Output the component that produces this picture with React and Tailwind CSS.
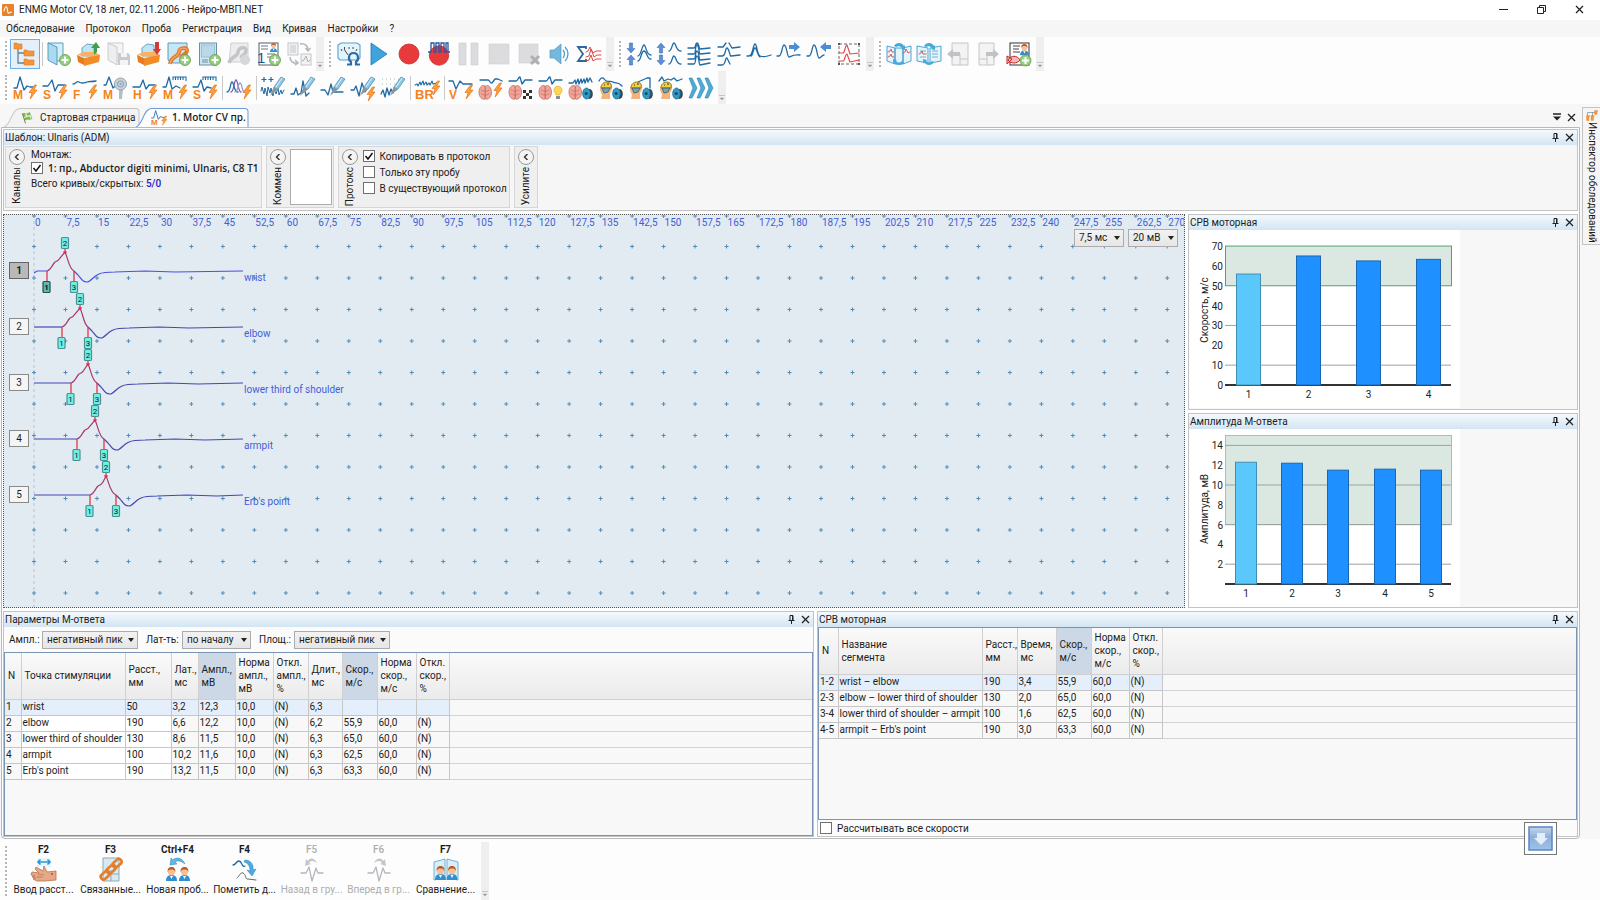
import { useState } from 'react';
import { clsx } from 'clsx';

const BLUE = '#1f6aa5';
const ORANGE = '#f58220';
const GRAY = '#c4c6ca';

/* ---------- icon parts ---------- */

const Wave = ({ d, c = BLUE, w = 1.3 }) => (
  <path d={d} fill="none" stroke={c} strokeWidth={w} strokeLinejoin="round" strokeLinecap="round" />
);

const Bolt = ({ x = 16, y = 9 }) => (
  <path
    transform={`translate(${x} ${y})`}
    d="M5.5 0L0 7.5h3L1.2 14 8 5H4.8L7.6 0z"
    fill="#f9a13a"
    stroke="#e8701a"
    strokeWidth=".7"
  />
);

const Letter = ({ x = 0, y = 23, size = 12, children, c = ORANGE }) => (
  <text x={x} y={y} fontSize={size} fontWeight="700" fill={c} fontFamily="Liberation Sans, sans-serif">
    {children}
  </text>
);

const Plus = ({ x = 18, y = 18 }) => (
  <g>
    <circle cx={x} cy={y} r="5.5" fill="#9bcf80" stroke="#5f9d4b" strokeWidth=".8" />
    <path d={`M${x - 3.4} ${y}h6.8M${x} ${y - 3.4}v6.8`} stroke="#fff" strokeWidth="2" />
  </g>
);

const Brain = () => (
  <g fill="#f0a79b" stroke="#c96a60" strokeWidth=".8">
    <path d="M6 10C3 8 0 12 0 16c0 5 3 8 6 7z" />
    <path d="M6.500 10c3-2 6 2 6 6 0 5-3 8-6 7z" />
    <path fill="none" d="M2 14c2 0 2 2 4 1M2 18c2-1 2 2 4 1M10.500 14c-2 0-2 2-4 1M10.500 18c-2-1-2 2-4 1" />
  </g>
);

const Horn = () => (
  <g>
    <ellipse cx="20.500" cy="18" rx="3.300" ry="5" fill="#3c4650" />
    <ellipse cx="17.500" cy="17.500" rx="3.800" ry="5.500" fill="#2f9ac4" stroke="#176a91" strokeWidth=".8" />
    <circle cx="17.200" cy="17.500" r="1.500" fill="#0f4d6e" />
  </g>
);

const Head = () => (
  <g>
    <path d="M2 23l1-4-2-5c0-5 3-8 7-8 4 0 6 3 5 7l-2 4v6z" fill="#f2b27c" />
    <path d="M2 12c0-4 3-6 6-6 3.500 0 5 3 4 6z" fill="#f3cf3a" stroke="#7a6a28" strokeWidth=".8" />
    <path d="M3 12h8l-2 4-4 1z" fill="#6fa5b5" stroke="#3b5968" strokeWidth=".8" />
    <path d="M5 9h1M8 8h2" stroke="#333" />
  </g>
);

const Pen = () => (
  <g>
    <path d="M11 17l2-6 7-10 4 2-7 10z" fill="#8cc7e6" stroke="#5790b4" strokeWidth=".8" />
    <path d="M9 20l4-9 4 2z" fill="#8d969d" />
    <path d="M15 11l6-9" stroke="#dff2fb" />
  </g>
);

const Ruler = () => <path d="M10 4V1h13v4M12.500 1v3M15 1v3M17.500 1v3M20 1v3" fill="none" stroke={BLUE} strokeWidth="1.100" />;

const Book = ({ gray }) => (
  <g fill={gray ? '#eeeeef' : '#a9daf0'} stroke={gray ? GRAY : '#4c93b8'} strokeWidth=".9">
    <path d="M1 1h15v18H6z" fill={gray ? '#f5f5f6' : '#d5eef8'} />
    <path d="M1 1l9 4v18L1 18z" />
  </g>
);

const Floppy = () => (
  <g transform="translate(11 11)">
    <path d="M0 0h10l2 2v10H0z" fill="#c9cbce" />
    <path d="M3 0h6v4H3zM2 7h8v5H2z" fill="#f4f4f5" />
  </g>
);

const Box = ({ up }) => (
  <g>
    <path d="M5 6l5-4 7 1v11H5z" fill="#bfe4f3" stroke="#4e92b3" strokeWidth=".8" />
    <path d="M0 13l6-3h12l5 3-2 3z" fill="#fbb161" />
    <path d="M0 13l7 3v7l-6-3z" fill="#e77b1d" />
    <path d="M7 16l16-3-1 7-15 4z" fill="#f28c28" />
    {up ? (
      <path d="M17 13V6h-3l5-6 4 6h-3v4z" fill="#3fa04a" />
    ) : (
      <path d="M18 0h4v7h2l-4 6-4-6h2z" fill="#d33a36" />
    )}
  </g>
);

const Person = ({ x, y = 0 }) => (
  <g transform={`translate(${x} ${y})`}>
    <path d="M0 14c0-4 2-6 5.500-6S11 10 11 14z" fill="#2f8fd0" />
    <path d="M4 9l1.500 3L7 9z" fill="#fff" />
    <circle cx="5.500" cy="4.800" r="3.600" fill="#f6c197" />
    <path d="M1.500 5c0-4 2-5 4-5s4 1 4 5c-1-2-2-2.500-4-2.500S2.500 3 1.500 5z" fill="#c0561f" />
  </g>
);

const VArrow = ({ x, y, down }) => (
  <path
    transform={`translate(${x} ${y})${down ? ' rotate(180)' : ''}`}
    d="M0-5l4 4.500H1.600V5h-3.200V-.5H-4z"
    fill="#5b8fd6"
    stroke="#3a67ad"
    strokeWidth=".5"
  />
);

/* ---------- icons ---------- */

const icons = {
  app: (
    <>
      <rect width="24" height="24" rx="2" fill="#e8822a" />
      <Wave d="M4 14c3-12 6-10 7-1s4 4 8 3" c="#fff" w={2.2} />
    </>
  ),
  tree: (
    <>
      <path d="M5 6v15h7M5 11h8" fill="none" stroke="#6d7f90" strokeWidth="1.300" />
      <g fill="#f5943a" stroke="#e07a1a" strokeWidth=".6">
        <path d="M1 1h3l1 1h4v5H1z" />
        <path d="M11 8h3l1 1h6v5H11z" />
        <path d="M11 17h3l1 1h6v5H11z" />
      </g>
    </>
  ),
  bookAdd: (<><Book /><Plus /></>),
  boxUp: <Box up />,
  bookSave: (<><Book gray /><Floppy /></>),
  boxDown: <Box />,
  bookLoop: (
    <>
      <path d="M1 1h19v20H6l-5-3z" fill="#c5e6f3" stroke="#4c93b8" strokeWidth=".9" />
      <path d="M3 22C4 14 12 15 12 10s9-5 8-1-5 3-6 7" fill="none" stroke="#e5782a" strokeWidth="4" />
      <path d="M3 22C4 14 12 15 12 10s9-5 8-1" fill="none" stroke="#f7a862" strokeWidth="1.200" />
      <Plus />
    </>
  ),
  formAdd: (
    <>
      <rect x="2.500" y="1" width="17" height="22" fill="#cfe5ef" stroke="#6b8fa5" />
      <rect x="4.500" y="3" width="13" height="12" fill="#b9d9ea" stroke="#8fb4c8" strokeWidth=".7" />
      <path d="M5 18h6M5 20h6" stroke="#6b8fa5" />
      <Plus />
    </>
  ),
  loopGray: (
    <>
      <path d="M4 1h17v19H2z" fill="#ededee" stroke={GRAY} strokeWidth=".8" />
      <path d="M2 21c2-7 9-6 9-11s9-6 8-1-4 3-5 7" fill="none" stroke="#c3c5c8" strokeWidth="3.600" />
      <circle cx="18" cy="18" r="5" fill="#d6d7d9" />
    </>
  ),
  listAdd: (
    <>
      <rect x="2" y="1" width="19" height="22" fill="#fff" stroke="#555f69" />
      <path d="M4 4h7M4 7h7M10 12h8M10 15h8" stroke="#6c7883" strokeWidth="1.200" />
      <g transform="translate(13 1) scale(.65)"><Person x={0} /></g>
      <text x="0" y="21" fontSize="15" fill="#21548c" fontFamily="Liberation Sans, sans-serif">1</text>
      <Plus />
    </>
  ),
  convert: (
    <>
      <rect x="1" y="1" width="10" height="12" fill="#f2f2f3" stroke={GRAY} />
      <path d="M3 4h6M3 6h6M3 8h6M3 10h6" stroke={GRAY} />
      <rect x="14" y="12" width="10" height="11" fill="#f2f2f3" stroke={GRAY} />
      <Wave d="M15 19l2-1 2-4 2 6 2-2" c="#aeb1b5" w={1} />
      <path d="M13 2c5-1 8 2 8 6M18.500 6l2.500 3 2.500-3M3 15c0 4 3 7 8 6M8 18l3 3-3 2" fill="none" stroke="#b6b9bd" strokeWidth="1.600" />
    </>
  ),
  ohm: (
    <>
      <path d="M1 3l3-2h16l3 2v13l-2 2H3l-2-2z" fill="#e4f4fb" stroke="#4fa4d0" strokeWidth="1.100" />
      <path d="M4 7l1 2M7.500 5v2M12 5v2M16 5v2M20 7l-1 2M7 7l4 6" stroke="#333" strokeWidth=".9" />
      <path d="M10 22.500h4V20c-3-2-3-9 2.500-9s5.500 7 2.500 9v2.500h4" fill="none" stroke="#2d6ca8" strokeWidth="2.200" />
    </>
  ),
  play: <path d="M4 1l16 11L4 23z" fill="#3fa3de" stroke="#2277b4" strokeWidth=".8" />,
  record: <circle cx="12" cy="12" r="10" fill="#e83a3a" stroke="#c22c2c" strokeWidth=".8" />,
  recordPulse: (
    <>
      <circle cx="12" cy="13.500" r="9.700" fill="#e83a3a" stroke="#c22c2c" strokeWidth=".8" />
      <path d="M1 10h3V1h3v9h2V1h3v9h2V1h3v9h2V1h2v9h2" fill="none" stroke="#2b55a0" strokeWidth="1.300" />
    </>
  ),
  pause: <path d="M2 1h7v22H2zM14 1h7v22h-7z" fill="#dcdcde" stroke="#cfcfd1" strokeWidth=".6" />,
  stop: <rect x="2" y="2" width="20" height="20" fill="#dcdcde" stroke="#cfcfd1" strokeWidth=".6" />,
  stopX: (
    <>
      <rect x="2" y="2" width="19" height="19" fill="#dcdcde" stroke="#cfcfd1" strokeWidth=".6" />
      <path d="M14 14l8 8M22 14l-8 8" stroke="#adafb2" strokeWidth="3" />
    </>
  ),
  sound: (
    <>
      <path d="M3 8h4l7-6v20l-7-6H3z" fill="#74b9dc" stroke="#5597bd" strokeWidth=".7" />
      <path d="M16 8c2 2 2 6 0 8M18 5c4 4 4 10 0 14" fill="none" stroke="#4c9ecb" strokeWidth="1.300" />
    </>
  ),
  sigma: (
    <>
      <path d="M9 7V5H1l5 7-5 7h8v-2" fill="none" stroke="#2c689f" strokeWidth="1.800" />
      <Wave d="M9 10l2-1 2-4 3 6 3-2 5 0" c="#e04848" w={1} />
      <Wave d="M9 15l3-1 2-7 3 8 3-2 4 0" c="#e04848" w={1} />
      <Wave d="M9 19l3-1 2-5 2 6 3-2 5 0" c="#e04848" w={1} />
    </>
  ),
  squeeze: (
    <>
      <VArrow x={4} y={6} down />
      <VArrow x={4} y={18} />
      <Wave d="M11 14c3 0 4-11 6-11s2 10 7 10M11 19c3 0 3-10 6-10s3 9 7 8" />
    </>
  ),
  spread: (
    <>
      <VArrow x={4} y={6} />
      <VArrow x={4} y={18} down />
      <Wave d="M12 9c3 0 3-8 5-8s2 9 7 8M12 22c3 0 3-8 5-8s2 9 7 8" />
    </>
  ),
  stack4: <Wave d="M1 6h6c2 0 1-5 3-5s2 6 3 6l10-1M1 12h6c2 0 1-9 3-9s2 9 3 9l10-1M1 17h6c2 0 1-8 3-8s2 9 3 9l10-1M1 22h6c2 0 1-8 3-8s2 9 3 9l10-2" />,
  stack3: <Wave d="M1 5h5l3-4M12 1l3 5 8-1M1 14h4c4 0 3-8 5-8s3 9 4 8l9-1M1 23h4c4 0 3-8 5-7l3 6" />,
  overlay: <Wave d="M0 14h2c4 0 4-12 6-12s2 11 5 12 4 1 11-1M4 14c2 0 2-8 4-8s2 7 5 9" />,
  waveRight: (
    <>
      <Wave d="M0 14h2c3 0 3-11 5-11 3 0 3 12 5 12s3-3 11-2" />
      <path d="M12 3h5V0l6 5-6 5V7h-5z" fill="#4b8fd2" />
    </>
  ),
  waveLeft: (
    <>
      <Wave d="M0 14h2c3 0 3-11 5-11 3 0 3 13 5 13s3-3 5-3" />
      <path d="M24 3h-5V0l-6 5 6 5V7h5z" fill="#4b8fd2" />
    </>
  ),
  region: (
    <>
      <rect x="2" y="2" width="20" height="20" fill="none" stroke="#666" strokeDasharray="3 2" />
      <path d="M1 1h2v2H1zM21 1h2v2h-2zM1 21h2v2H1zM21 21h2v2h-2z" fill="#555" />
      <Wave d="M2 11h4c2 0 2-8 4-8l3 9 9-1" c="#e04848" w={1.1} />
      <Wave d="M2 19h4c2 0 2-7 4-7l3 8 9-2" c="#e04848" w={1.1} />
    </>
  ),
  compareA: (
    <>
      <path d="M0 4l8 2v16l-8-3zM24 4l-8 2v16l8-3zM8 6h8v16H8z" fill="#e4f4fb" stroke="#3e9bc8" strokeWidth=".9" />
      <Wave d="M1 10l2-1 1-2 1 3 2 0M1 15l2-1 1-2 1 3 2 0" c="#e04848" w={0.9} />
      <Wave d="M16 11l2-1 1-3 2 4 2-1" c="#e04848" w={0.9} />
      <path d="M7 4c2-4 8-4 10 0l1-1v5l-4-1 1-1c-2-2-4-2-6-1zM17 20c-2 4-8 4-10 0l-1 2v-5l4 1-1 1c2 2 4 2 6 0z" fill="#46a9dc" />
    </>
  ),
  compareB: (
    <>
      <path d="M0 4l11 2v15L0 19zM24 4L13 6v15l11-2z" fill="#e4f4fb" stroke="#3e9bc8" strokeWidth=".9" />
      <path d="M3 9h6M3 15h6M15 9h6M15 15h6M15 12h6" stroke="#6eb2d0" />
      <Wave d="M2 12l2-1 1-2 1 3 3 0" c="#e04848" w={0.9} />
      <path d="M7 4c2-4 8-4 10 0l1-1v5l-4-1 1-1c-2-2-4-2-6-1zM17 20c-2 4-8 4-10 0l-1 2v-5l4 1-1 1c2 2 4 2 6 0z" fill="#46a9dc" />
    </>
  ),
  pagePrev: (
    <>
      <path d="M5 1h16v22H5zM13 12v11M13 17h8" fill="#f3f3f4" stroke={GRAY} />
      <path d="M0 12l6-5v3h7v4H6v3z" fill="#c0c2c5" />
    </>
  ),
  pageNext: (
    <>
      <path d="M2 1h15v22H2zM10 12v11M2 17h8" fill="#f3f3f4" stroke={GRAY} />
      <path d="M22 12l-6-5v3H9v4h7v3z" fill="#c0c2c5" />
    </>
  ),
  report: (
    <>
      <rect x="3" y="1" width="19" height="22" fill="#fff" stroke="#333" />
      <path d="M6 4h7M6 7h6M6 10h7" stroke="#444" strokeWidth="1.200" />
      <g transform="translate(13 2) scale(.8)"><Person x={0} /></g>
      <path d="M0 14l5 3-5 5zM1 18c3-5 9-5 12 0-3 4-9 4-12 0z" fill="#f3b8b4" stroke="#c3262a" />
      <Plus x={18.5} y={18.5} />
    </>
  ),

  mBolt: (<><Wave d="M1 12h3l3-11 4 13 3-4 3 1h3" /><Letter>M</Letter><Bolt /></>),
  sBolt: (<><Wave d="M0 10h5l4-6 3 11 3-6 7 0" /><Letter>S</Letter><Bolt /></>),
  fBolt: (<><Wave d="M0 8c4 0 3-4 6-2s5 1 8 0 4 0 9-1" /><Letter>F</Letter><Bolt /></>),
  mCoil: (
    <>
      <Wave d="M1 9h2l3-8 4 11 3-3" />
      <Letter>M</Letter>
      <path d="M16 13h4l-1 10h-3z" fill="#b4bcc4" />
      <circle cx="17.500" cy="8" r="6" fill="#c7d3dc" stroke="#93a3b0" />
      <circle cx="17.500" cy="8" r="3" fill="none" stroke="#8b9cab" />
      <circle cx="17.500" cy="8" r="1" fill="#8b9cab" />
    </>
  ),
  hBolt: (<><Wave d="M0 11h7l3-7 3 9 3-4 6 0" /><Letter>H</Letter><Bolt /></>),
  mRuler: (<><Wave d="M0 11h3l3-10 3 12 4-3 4 2" /><Ruler /><Letter>M</Letter><Bolt /></>),
  sRuler: (<><Wave d="M0 11h5l3-7 3 11 3-4 4 1" /><Ruler /><Letter>S</Letter><Bolt /></>),
  multi: (
    <>
      <Wave d="M0 16c4 0 3-10 5-10s2 11 6 10" />
      <Wave d="M4 16c3 0 3-12 5-12s2 12 5 12" c="#7d5bb5" />
      <Wave d="M8 16c3 0 3-9 5-9s2 8 4 9" c="#8fa0d0" />
      <Bolt />
    </>
  ),
  noisePen: (
    <>
      <path d="M3 1v5M.5 3.500h5M10 1v5M7.500 3.500h5" stroke={BLUE} strokeWidth="1.200" />
      <Wave d="M0 15l1-4 2 7 1-6 2 8 1-9 2 6 1-5 2 8 1-7 2 5 2-6 1 7 2-5 1 4 2-4" w={1} />
      <Pen />
    </>
  ),
  spikePen: (<><Wave d="M0 18h3l2-6 2 7 3-2 2-12 3 15 3-3" /><Pen /></>),
  ecgPen: (<><Wave d="M0 14h4l3 5 3-11 2 8h10" /><Pen /></>),
  boltPen: (<><Wave d="M0 14h3l2-4 3 10 3-13 3 9 5-8" /><Pen /><Bolt x={16} y={11} /></>),
  dotPen: (<><path d="M1 3h20M1 8h20" stroke="#a9b6c2" strokeDasharray="1 3" /><Wave d="M0 18l2-4 2 7 2-9 2 7 2-6 2 4 2-6" /><Pen /></>),
  br: (<><Wave d="M0 9l2-1 1 2 2-4 1 3 2-4 1 4 2-3 1 3 2-2 1 2 2-4 1 3 4-1" w={1.1} /><Letter size={13}>BR</Letter><Bolt x={17} y={5} /></>),
  vBolt: (<><Wave d="M0 5h4l3 8 4-8 3 3h9" /><Letter>V</Letter><Bolt /></>),
  brainBolt: (<><Wave d="M1 4h8c2 0 2 4 4 3l3-4h3l4 2" /><Brain /><Bolt x={15} y={7} /></>),
  brainCheck: (
    <>
      <Wave d="M0 5h7c2 0 2-4 4-4l2 7 3-4 7 0" />
      <Brain />
      <path d="M14 14h3v3h-3zM20 14h3v3h-3zM17 17h3v3h-3zM14 20h3v3h-3zM20 20h3v3h-3z" fill="#333" />
    </>
  ),
  brainBulb: (
    <>
      <Wave d="M0 5h7c2 0 2-4 4-4l2 7 3-4 7 0" />
      <Brain />
      <path d="M15 14c0-5 8-5 8 0 0 3-2 3-2 5h-4c0-2-2-2-2-5z" fill="#fcd75a" stroke="#e0a92c" strokeWidth=".7" />
      <path d="M17 20h4v3h-4z" fill="#8b8f94" />
    </>
  ),
  brainHorn: (<><Wave d="M0 7h4l2-3 1 4 2-5 1 5 2-5 1 4 2-4 1 4 2-5 1 4 2-4 2 4" /><Brain /><Horn /></>),
  headA: (<><Wave d="M0 5c2-4 4-4 6-1s5 0 8 2 5-1 9 4" /><Head /><Horn /></>),
  headB: (<><Wave d="M9 6l9-4h3v10" /><Head /><Horn /></>),
  headC: (<><Wave d="M0 5l3-4 2 4 4-2 3 1 3-2 3 3 5-2" /><Head /><Horn /></>),
  more: (
    <g fill="#4bacd8" stroke="#2c80ad" strokeWidth=".6">
      <path d="M0 2h3l5 10-5 10H0l4-10zM8 2h3l5 10-5 10H8l4-10zM16 2h3l5 10-5 10h-3l4-10z" />
    </g>
  ),

  flag: (
    <>
      <path d="M3 3l6 20" stroke="#8a6a3a" strokeWidth="1.800" />
      <path d="M3 4c5-3 8 2 14-3l5 12c-6 4-9-1-14 3z" fill="#7fbf4d" stroke="#4d8a2a" />
      <path d="M9 3l3 6-6 2M12 9l6-2 2 6" fill="none" stroke="#e5f3d6" strokeWidth="2.500" />
    </>
  ),
  hand: (
    <>
      <path d="M5 0h14v9H5z" fill="#e8f4fb" />
      <path d="M6 4h12M8.500 1.500L6 4l2.500 2.500M15.500 1.500L18 4l-2.500 2.500" fill="none" stroke="#2f98d2" strokeWidth="1.700" />
      <path d="M0 14l7 1-4-4 1-2 7 4 1-5 3 6 9-1v9l-11 1-8 0-4-2 3-1-4-1 3-1-4-1z" fill="#e3a988" stroke="#b9714e" strokeWidth=".8" />
      <path d="M6 16l6 1M5 19h6" stroke="#b9714e" strokeWidth=".7" />
      <circle cx="20" cy="16" r="1" fill="#c63c2c" />
    </>
  ),
  link: (
    <>
      <path d="M4 0h16v23H4zM12 12v11M12 16h8" fill="#d9e8f1" stroke="#8ca9bc" />
      <g fill="none" stroke="#e07f2c" strokeWidth="2.600">
        <rect x="-5" y="-2.500" width="10" height="5.500" rx="2.700" transform="translate(6 17) rotate(-42)" />
        <rect x="-5" y="-2.500" width="10" height="5.500" rx="2.700" transform="translate(12 11) rotate(-42)" />
        <rect x="-5" y="-2.500" width="10" height="5.500" rx="2.700" transform="translate(18 5) rotate(-42)" />
      </g>
    </>
  ),
  newTrial: (
    <>
      <path d="M19 6C16-1 9-1 7 2L5 0 4 7l7-1-2-2c3-2 6-1 10 2z" fill="#5db8e2" stroke="#3589b5" strokeWidth=".5" />
      <Person x={0} y={9} />
      <Person x={13} y={9} />
    </>
  ),
  mark: (
    <>
      <Wave d="M0 7c3 0 3-4 6-4s3 7 6 5" />
      <path d="M12 2c6 0 9 5 8 10l3-1-4 7-5-6 3 1c0-5-2-8-6-9z" fill="#4bacdf" stroke="#2b83b4" strokeWidth=".5" />
      <Wave d="M4 20c2-1 3-6 6-5s2 7 5 6l8 1" c="#666" w={1} />
    </>
  ),
  back: (
    <>
      <path d="M17 5C14-1 9 0 8 3L6 1 5 8l6-2-2-1c2-3 5-2 8 0z" fill="#c5c6c9" />
      <Wave d="M1 15h5l3-6 3 14 4-13 2 5h5" c="#b5b7ba" />
    </>
  ),
  forward: (
    <>
      <path d="M7 5c3-6 8-5 9-2l2-2 1 7-6-2 2-1c-2-3-5-2-8 0z" fill="#c5c6c9" />
      <Wave d="M1 15h5l3-6 3 14 4-13 2 5h5" c="#b5b7ba" />
    </>
  ),
  compare: (
    <>
      <path d="M0 4l11-3v19l-11 2zM24 4L13 1v19l11 2z" fill="#d8eef8" stroke="#62a9cc" strokeWidth=".9" />
      <Person x={1} y={8} />
      <Person x={12.5} y={8} />
    </>
  ),
};

const Icon = ({ name, className = 'size-6' }) => (
  <svg viewBox="0 0 24 24" className={clsx('shrink-0 overflow-visible', className)} aria-hidden="true">
    {icons[name]}
  </svg>
);

/* ---------- data ---------- */

const menuItems = ['Обследование', 'Протокол', 'Проба', 'Регистрация', 'Вид', 'Кривая', 'Настройки', '?'];

const topBars = [
  ['tree', '|', 'bookAdd', 'boxUp', 'bookSave', 'boxDown', 'bookLoop', 'formAdd', 'loopGray', 'listAdd', 'convert'],
  ['ohm', 'play', 'record', 'recordPulse', 'pause', 'stop', 'stopX', 'sound', 'sigma'],
  ['squeeze', 'spread', 'stack4', 'stack3', 'overlay', 'waveRight', 'waveLeft', 'region'],
  ['compareA', 'compareB', 'pagePrev', 'pageNext', 'report'],
];

const testBar = [
  'mBolt', 'sBolt', 'fBolt', 'mCoil', 'hBolt', 'mRuler', 'sRuler', '|', 'multi', '|',
  'noisePen', 'spikePen', 'ecgPen', 'boltPen', 'dotPen', '|', 'br', '|',
  'vBolt', 'brainBolt', 'brainCheck', 'brainBulb', 'brainHorn', 'headA', 'headB', 'headC', 'more',
];

const footerButtons = [
  { key: 'F2', icon: 'hand', label: 'Ввод расст...' },
  { key: 'F3', icon: 'link', label: 'Связанные...' },
  { key: 'Ctrl+F4', icon: 'newTrial', label: 'Новая проб...' },
  { key: 'F4', icon: 'mark', label: 'Пометить д...' },
  { key: 'F5', icon: 'back', label: 'Назад в гру...', disabled: true },
  { key: 'F6', icon: 'forward', label: 'Вперед в гр...', disabled: true },
  { key: 'F7', icon: 'compare', label: 'Сравнение...' },
];

// x positions of the onset, peak and end markers, y of the baseline, all inside the plot
const traces = [
  { name: 'wrist', base: 56, onset: 43, peak: 61, end: 70 },
  { name: 'elbow', base: 112, onset: 58, peak: 76, end: 84 },
  { name: 'lower third of shoulder', base: 168, onset: 67, peak: 84, end: 93 },
  { name: 'armpit', base: 224, onset: 73, peak: 91, end: 100 },
  { name: "Erb's point", base: 280, onset: 86, peak: 102, end: 112 },
];

const responseColumns = [
  { title: 'N', width: 'w-4' },
  { title: 'Точка стимуляции', width: 'w-[104px]' },
  { title: 'Расст.,\nмм', width: 'w-[46px]' },
  { title: 'Лат.,\nмс', width: 'w-[27px]' },
  { title: 'Ампл.,\nмВ', width: 'w-[37px]', active: true },
  { title: 'Норма\nампл.,\nмВ', width: 'w-[38px]' },
  { title: 'Откл.\nампл.,\n%', width: 'w-[35px]' },
  { title: 'Длит.,\nмс', width: 'w-[34px]' },
  { title: 'Скор.,\nм/с', width: 'w-[35px]', active: true },
  { title: 'Норма\nскор.,\nм/с', width: 'w-[39px]' },
  { title: 'Откл.\nскор.,\n%', width: 'w-[33px]' },
];

const responseRows = [
  ['1', 'wrist', '50', '3,2', '12,3', '10,0', '(N)', '6,3', '', '', ''],
  ['2', 'elbow', '190', '6,6', '12,2', '10,0', '(N)', '6,2', '55,9', '60,0', '(N)'],
  ['3', 'lower third of shoulder', '130', '8,6', '11,5', '10,0', '(N)', '6,3', '65,0', '60,0', '(N)'],
  ['4', 'armpit', '100', '10,2', '11,6', '10,0', '(N)', '6,3', '62,5', '60,0', '(N)'],
  ['5', "Erb's point", '190', '13,2', '11,5', '10,0', '(N)', '6,3', '63,3', '60,0', '(N)'],
];

const speedColumns = [
  { title: 'N', width: 'w-[19px]' },
  { title: 'Название\nсегмента', width: 'w-[144px]' },
  { title: 'Расст.,\nмм', width: 'w-[35px]' },
  { title: 'Время,\nмс', width: 'w-[39px]' },
  { title: 'Скор.,\nм/с', width: 'w-[35px]', active: true },
  { title: 'Норма\nскор.,\nм/с', width: 'w-[38px]' },
  { title: 'Откл.\nскор.,\n%', width: 'w-[33px]' },
];

const speedRows = [
  ['1-2', 'wrist – elbow', '190', '3,4', '55,9', '60,0', '(N)'],
  ['2-3', 'elbow – lower third of shoulder', '130', '2,0', '65,0', '60,0', '(N)'],
  ['3-4', 'lower third of shoulder – armpit', '100', '1,6', '62,5', '60,0', '(N)'],
  ['4-5', "armpit – Erb's point", '190', '3,0', '63,3', '60,0', '(N)'],
];

/* ---------- controls ---------- */

const Grip = () => <span className="w-0 self-stretch my-1 mr-[3px] border-l-2 border-dotted border-[#b5b5b5]" />;

const Overflow = () => (
  <button aria-label="Параметры панели" className="w-2 self-stretch ml-[2px] bg-[#efefef] flex flex-col items-center justify-end pb-1">
    <svg viewBox="0 0 6 5" className="w-[6px] h-[5px]">
      <path d="M0 .5h6M1 3h4L3 5z" fill="#999" stroke="#aaa" strokeWidth=".6" />
    </svg>
  </button>
);

const Toolbar = ({ items }) => (
  <div className="flex items-center pl-[5px]">
    <Grip />
    {items.map((name, i) =>
      name === '|' ? (
        <span key={i} className="w-px h-6 ml-[2px] mr-px bg-[#c9c9c9]" />
      ) : (
        <button
          key={i}
          aria-label={name}
          className={clsx(
            'w-[30px] h-[30px] flex items-center justify-center border',
            name === 'tree' ? 'border-[#6fb0ea] bg-[#e3f0fb]' : 'border-transparent'
          )}
        >
          <Icon name={name} />
        </button>
      )
    )}
    <Overflow />
  </div>
);

const Check = ({ label, defaultChecked, bold }) => (
  <label className="flex items-center gap-[5px] h-4">
    <span className="relative flex size-3">
      <input
        type="checkbox"
        defaultChecked={defaultChecked}
        className="peer appearance-none size-3 bg-white border border-[#707070]"
      />
      <svg viewBox="0 0 12 12" className="absolute inset-0 size-3 hidden peer-checked:block pointer-events-none">
        <path d="M2.500 6l2.500 3 4.500-6" fill="none" stroke="#111" strokeWidth="1.500" />
      </svg>
    </span>
    <span className={clsx('whitespace-nowrap', bold && "font-semibold font-['Open_Sans',sans-serif]")}>{label}</span>
  </label>
);

const Select = ({ label, value, className }) => (
  <span className={clsx('relative flex', className)}>
    <select
      aria-label={label}
      defaultValue={value}
      className="appearance-none w-full h-[18px] pl-1 pr-3 border border-[#acacac] bg-linear-to-b from-[#f2f2f2] to-[#e6e6e6] leading-4"
    >
      <option>{value}</option>
    </select>
    <svg viewBox="0 0 6 4" className="absolute right-1 top-[7px] w-[6px] h-1 pointer-events-none">
      <path d="M0 0h6L3 4z" fill="#222" />
    </svg>
  </span>
);

const CloseIcon = () => (
  <svg viewBox="0 0 9 9" className="size-[9px]">
    <path d="M1 1l7 7M8 1L1 8" stroke="#222" strokeWidth="1.300" />
  </svg>
);

const PinIcon = () => (
  <svg viewBox="0 0 7 9" className="w-[7px] h-[9px]">
    <path d="M2 .5h3v5H2zM.5 5.500h6M3.500 6v3" fill="none" stroke="#222" />
    <path d="M4.500 1v4" stroke="#222" />
  </svg>
);

const PanelTitle = ({ children }) => (
  <header className="h-[15px] pl-px pr-[3px] flex items-center bg-linear-to-b from-[#f4f9fe] to-[#d3e5f3]">
    <h2 className="flex-1 leading-[15px]">{children}</h2>
    <div className="flex items-center gap-[6px]">
      <button aria-label="Закрепить"><PinIcon /></button>
      <button aria-label="Закрыть"><CloseIcon /></button>
    </div>
  </header>
);

const Group = ({ title, children }) => (
  <section className="h-[62px] flex border border-[#d6d6d6] bg-[#efefef]">
    <div className="w-[22px] pt-[2px] flex flex-col items-center gap-[2px]">
      <button aria-label="Свернуть" className="size-4 shrink-0 rounded-full border border-[#999] bg-[#f4f4f4] flex items-center justify-center">
        <svg viewBox="0 0 6 6" className="size-[6px]">
          <path d="M4.500 0L1.500 3l3 3" fill="none" stroke="#333" strokeWidth="1.400" />
        </svg>
      </button>
      <span className="leading-3 whitespace-nowrap [writing-mode:vertical-rl] rotate-180">{title}</span>
    </div>
    {children}
  </section>
);

/* ---------- plot ---------- */

const Marker = ({ x, y, n, dark }) => (
  <g>
    <rect x={x - 3.5} y={y - 5.5} width="7" height="11" rx="1" fill={dark ? '#5bb8b2' : '#6ff0e6'} stroke={dark ? '#22504e' : '#4d8f93'} />
    <text x={x} y={y + 3} textAnchor="middle" fontSize="8" fontWeight={dark ? 700 : 400} fill="#111">{n}</text>
  </g>
);

const Trace = ({ name, base, onset, peak, end, first }) => {
  const top = base - 19;
  const color = first ? '#4a4fe0' : '#4347b0';
  return (
    <g fill="none" strokeWidth="1.200">
      <path d={`M30 ${base + (first ? 2 : 0)}l3-${first ? 2 : 0}H${onset}`} stroke={color} />
      <path
        d={`M${onset} ${base}c4-1 5-6 8-9c3-1 4-2 5-4L${peak} ${top}C${peak + 3} ${top + 6} ${peak + 4} ${base - 2} ${end} ${base}`}
        stroke="#a8386e"
      />
      <path
        d={`M${end} ${base}l4 4c4 5 5 7 9 7s6-6 12-8c4-2 9-2 16-2l30-1 30 1L239 ${base}`}
        stroke={color}
      />
      <path d={`M${onset} ${base}v10M${end} ${base}v10M${peak} ${top - 3}v5M${peak - 2} ${top}h4`} stroke="#e02a3a" />
      <Marker x={onset - 0.5} y={base + 16} n="1" dark={first} />
      <Marker x={peak} y={base - 28} n="2" />
      <Marker x={end} y={base + 16} n="3" />
      <text x="240" y={base + 10} fontSize="10" fill="#3f5fd8">{name}</text>
    </g>
  );
};

const STEP = 31.48;

const Plot = () => {
  const cols = Array.from({ length: 37 }, (_, i) => i);
  const rows = Array.from({ length: 12 }, (_, i) => i);
  return (
    <svg className="block w-full h-[392px]">
      <path d="M30 0v392" stroke="#b9c3cc" strokeDasharray="3 3" />
      {cols.map((c) => (
        <g key={c}>
          <path d={`M${30 + c * STEP - 2} 1h4M${30 + c * STEP} 0v3`} stroke="#5c8fb4" />
          <text x={31 + c * STEP} y="11" fontSize="10" fill="#3f5fd8">
            {String(c * 7.5).replace('.', ',')}
          </text>
          {rows.map((r) => (
            <path key={r} d={`M${28 + c * STEP} ${31.5 + r * 31.5}h4m-2-2v4`} stroke="#4f8cb8" />
          ))}
        </g>
      ))}
      {traces.map((t, i) => (
        <Trace key={t.name} {...t} first={i === 0} />
      ))}
    </svg>
  );
};

/* ---------- bar charts ---------- */

const BarChart = ({ label, values, max, norm, ticks, lines, unit, xs, barWidth, border }) => {
  const y0 = 155;
  return (
    <svg className="block w-[271px] h-[178px] bg-white" role="img" aria-label={label}>
      <rect x="36.500" y={y0 - max * unit} width="226" height={(max - norm) * unit} fill="#dae8e1" stroke={border} />
      {lines.map((t) => (
        <path key={t} d={`M36 ${y0 - t * unit}h226`} stroke="#9aa39f" />
      ))}
      {ticks.map((t) => (
        <text key={t} x="34" y={y0 - t * unit + 4} textAnchor="end" fontSize="10" fill="#222">{t}</text>
      ))}
      <path d={`M36 ${y0}h226`} stroke="#333" strokeWidth="2" />
      {values.map((v, i) => (
        <g key={i}>
          <rect
            x={xs[i]}
            y={y0 - v * unit}
            width={barWidth}
            height={v * unit}
            fill={i === 0 ? '#5ac8fa' : '#1e90ff'}
            stroke={i === 0 ? '#3f8fb5' : '#1a66b0'}
          />
          <text x={xs[i] + barWidth / 2} y={y0 + 13} textAnchor="middle" fontSize="10" fill="#222">{i + 1}</text>
        </g>
      ))}
      <text transform={`translate(19 ${y0 - 75}) rotate(-90)`} textAnchor="middle" fontSize="10" fill="#222">{label}</text>
    </svg>
  );
};

/* ---------- tables ---------- */

const DataTable = ({ columns, rows, whiteCols = [] }) => (
  <table className="w-full table-fixed border-collapse text-left">
    <thead>
      <tr className="h-[46px] bg-linear-to-b from-[#fafafa] to-[#ebebeb]">
        {columns.map((c) => (
          <th
            key={c.title}
            className={clsx(
              'p-0 pl-[3px] font-normal leading-[13px] whitespace-pre border-r border-b border-[#d0d0d0]',
              c.width,
              c.active && 'bg-[#ccd8e6]'
            )}
          >
            {c.title}
          </th>
        ))}
        <th className="border-b border-[#d0d0d0]" />
      </tr>
    </thead>
    <tbody>
      {rows.map((row, r) => (
        <tr key={row[0]} className="h-4">
          {row.map((cell, i) => (
            <td
              key={i}
              className={clsx(
                'p-0 pl-px leading-[14px] whitespace-nowrap border-r border-b border-[#c6c6c6]',
                r === 0 ? 'bg-[#e5effc]' : whiteCols.includes(i) && 'bg-white'
              )}
            >
              {cell}
            </td>
          ))}
          <td className="p-0 border-b border-[#d4d4d4]" />
        </tr>
      ))}
    </tbody>
  </table>
);

/* ---------- page ---------- */

const App = () => {
  const [channel, setChannel] = useState(0);

  return (
    <div className="min-h-screen flex flex-col bg-[#fdfdfe] text-[10px] leading-[13px] text-[#1c1c1c] font-[Roboto,'Noto_Sans',sans-serif]">
      <header className="h-5 pl-[2px] pr-[2px] pb-px flex items-center bg-white">
        <Icon name="app" className="size-3" />
        <h1 className="ml-[5px] flex-1">ENMG Motor CV, 18 лет, 02.11.2006 - Нейро-МВП.NET</h1>
        <div className="flex text-[#222]">
          <button aria-label="Свернуть окно" className="w-[38px] h-4 flex items-center justify-center">
            <svg viewBox="0 0 9 9" className="size-[9px]"><path d="M0 4.500h9" stroke="currentColor" /></svg>
          </button>
          <button aria-label="Развернуть окно" className="w-[38px] h-4 flex items-center justify-center">
            <svg viewBox="0 0 9 9" className="size-[9px]"><path d="M.5 2.500h6v6h-6zM2.500 2.500v-2h6v6h-2" fill="none" stroke="currentColor" /></svg>
          </button>
          <button aria-label="Закрыть окно" className="w-[38px] h-4 flex items-center justify-center"><CloseIcon /></button>
        </div>
      </header>

      <nav className="h-[17px] flex items-center gap-[11px] pl-[6px] bg-[#f6f6f6]">
        {menuItems.map((item) => (
          <button key={item}>{item}</button>
        ))}
      </nav>

      <div className="h-[34px] flex">
        {topBars.map((items, i) => (
          <Toolbar key={i} items={items} />
        ))}
      </div>
      <div className="h-[33px] flex">
        <Toolbar items={testBar} />
      </div>

      <div className="flex bg-[#f7f7f7] pt-[3px]">
        <div className="flex-1 min-w-0 pl-px">
          <div className="h-5 flex items-end">
            <button className="relative h-[19px] w-[139px] pl-5 flex items-center gap-[7px]">
              <svg viewBox="0 0 138 19" className="absolute inset-0 size-full" preserveAspectRatio="none">
                <path d="M3 19C10 17 10 1 19 .5H134q3 0 3 3V19" fill="#f3f3f3" stroke="#c3c3c3" />
              </svg>
              <Icon name="flag" className="relative size-3" />
              <span className="relative whitespace-nowrap">Стартовая страница</span>
            </button>
            <button className="relative -ml-1 h-[19px] w-[113px] pl-[15px] flex items-center gap-[5px] font-semibold font-['Open_Sans',sans-serif]">
              <svg viewBox="0 0 112 19" className="absolute inset-0 size-full" preserveAspectRatio="none">
                <path d="M0 19C7 17 7 1 15 .5H108q3 0 3 3V19" fill="#fff" stroke="#6d9cd6" />
              </svg>
              <Icon name="mBolt" className="relative size-4" />
              <span className="relative whitespace-nowrap">1. Motor CV пр.</span>
            </button>
            <div className="ml-auto self-center flex items-center gap-[6px] pr-1">
              <button aria-label="Список вкладок">
                <svg viewBox="0 0 8 8" className="size-2"><path d="M0 1h8" stroke="#222" strokeWidth="1.500" /><path d="M0 3.500h8l-4 4z" fill="#222" /></svg>
              </button>
              <button aria-label="Закрыть вкладку"><CloseIcon /></button>
            </div>
          </div>

          <main className="rounded-b-sm border border-[#b9b9b9] bg-white p-px flex flex-col gap-[3px]">
            <section className="border border-[#c3c3c3] bg-[#f6f6f6]">
              <PanelTitle>Шаблон: Ulnaris (ADM)</PanelTitle>
              <div className="flex gap-1 p-[1px] pb-[2px]">
                <Group title="Каналы">
                  <div className="pl-[3px] pt-[2px] pr-[2px]">
                    <p className="leading-[11px]">Монтаж:</p>
                    <Check label="1: пр., Abductor digiti minimi, Ulnaris, C8 T1" defaultChecked bold />
                    <p className="leading-[15px]">Всего кривых/скрытых: <span className="text-[#1a1ad0] font-medium">5/0</span></p>
                  </div>
                </Group>
                <Group title="Коммен">
                  <textarea aria-label="Комментарий" className="m-px mt-[2px] w-[42px] h-[56px] resize-none bg-white border border-[#ababab]" />
                </Group>
                <Group title="Протокс">
                  <div className="flex flex-col pt-px pl-[2px] pr-[2px]">
                    <Check label="Копировать в протокол" defaultChecked />
                    <Check label="Только эту пробу" />
                    <Check label="В существующий протокол" />
                  </div>
                </Group>
                <Group title="Усилите" />
              </div>
            </section>

            <div className="flex gap-[3px]">
              <section className="relative flex-1 min-w-0 border border-dotted border-[#555] bg-[#e3ebf2]">
                <Plot />
                <div className="absolute left-[5px] top-[47px] flex flex-col gap-[39px]">
                  {traces.map((t, i) => (
                    <button
                      key={t.name}
                      onClick={() => setChannel(i)}
                      className={clsx(
                        'w-5 h-[17px] border',
                        channel === i ? 'border-[#666] bg-[#b9b9b9] font-bold' : 'border-[#8a8a8a] bg-[#f5f5f5]'
                      )}
                    >
                      {i + 1}
                    </button>
                  ))}
                </div>
                <div className="absolute right-[6px] top-[14px] flex gap-1">
                  <Select label="Развертка" value="7,5 мс" className="w-[50px]" />
                  <Select label="Чувствительность" value="20 мВ" className="w-[50px]" />
                </div>
              </section>

              <div className="w-[390px] flex flex-col gap-[3px]">
                <section className="flex-1 border border-[#c3c3c3] bg-[#f7f7f7]">
                  <PanelTitle>СРВ моторная</PanelTitle>
                  <BarChart
                    label="Скорость, м/с"
                    values={[55.9, 65, 62.5, 63.3]}
                    max={70}
                    norm={50}
                    ticks={[0, 10, 20, 30, 40, 50, 60, 70]}
                    lines={[10, 30]}
                    unit={1.985}
                    xs={[47.5, 107.5, 167.5, 227.5]}
                    barWidth={24}
                    border="#4fa36e"
                  />
                </section>
                <section className="flex-1 border border-[#c3c3c3] bg-[#f7f7f7]">
                  <PanelTitle>Амплитуда M-ответа</PanelTitle>
                  <BarChart
                    label="Амплитуда, мВ"
                    values={[12.3, 12.2, 11.5, 11.6, 11.5]}
                    max={15}
                    norm={6}
                    ticks={[2, 4, 6, 8, 10, 12, 14]}
                    lines={[2, 6, 10, 14]}
                    unit={9.9}
                    xs={[46.5, 92.5, 138.5, 185.5, 231.5]}
                    barWidth={21}
                    border="#a3c4b2"
                  />
                </section>
              </div>
            </div>

            <div className="grid grid-cols-[811fr_761fr] gap-[3px]">
              <section className="border border-[#c3c3c3] bg-[#fbfbfb] flex flex-col">
                <PanelTitle>Параметры M-ответа</PanelTitle>
                <div className="flex items-center h-[25px] pl-[5px]">
                  <span className="w-[33px]">Ампл.:</span>
                  <Select label="Ампл." value="негативный пик" className="w-24" />
                  <span className="ml-2 w-9">Лат-ть:</span>
                  <Select label="Лат-ть" value="по началу" className="w-[69px]" />
                  <span className="ml-2 w-[35px]">Площ.:</span>
                  <Select label="Площ." value="негативный пик" className="w-24" />
                </div>
                <div className="h-[184px] border border-[#7896b4] bg-[#f8f8f8]">
                  <DataTable columns={responseColumns} rows={responseRows} whiteCols={[1, 2]} />
                </div>
              </section>
              <section className="border border-[#c3c3c3] bg-[#fbfbfb] flex flex-col">
                <PanelTitle>СРВ моторная</PanelTitle>
                <div className="flex-1 border border-[#7896b4] bg-[#f8f8f8]">
                  <DataTable columns={speedColumns} rows={speedRows} />
                </div>
                <div className="pl-[2px]">
                  <Check label="Рассчитывать все скорости" />
                </div>
              </section>
            </div>
          </main>
        </div>

        <aside className="w-5 pl-[2px]">
          <button className="w-[18px] min-h-[138px] pt-[2px] flex flex-col items-center border border-r-0 border-[#c3c3c3] bg-[#f5f5f5]">
            <Icon name="tree" className="size-3 rotate-90" />
            <span className="leading-4 whitespace-nowrap [writing-mode:vertical-rl]">Инспектор обследований</span>
          </button>
        </aside>
      </div>

      <footer className="relative flex-1 flex pt-[3px]">
        <div className="flex pl-[5px]">
          <Grip />
          {footerButtons.map((b) => (
            <button
              key={b.key}
              disabled={b.disabled}
              className={clsx('w-[67px] flex flex-col items-center', b.disabled && 'text-[#adadad]')}
            >
              <span className={clsx('leading-4', b.disabled ? 'font-medium' : 'font-bold')}>{b.key}</span>
              <Icon name={b.icon} />
              <span className="leading-4 whitespace-nowrap">{b.label}</span>
            </button>
          ))}
          <Overflow />
        </div>
        <button
          aria-label="Прокрутить вниз"
          className="absolute right-[43px] -top-[17px] size-[33px] p-[3px] border border-[#777] bg-white"
        >
          <svg viewBox="0 0 25 25" className="size-full">
            <defs>
              <linearGradient id="down" x1="0" y1="0" x2="0" y2="1">
                <stop offset="0" stopColor="#c3d5ec" />
                <stop offset=".45" stopColor="#8eb0da" />
                <stop offset="1" stopColor="#9cc3ea" />
              </linearGradient>
            </defs>
            <rect x="1" y="1" width="23" height="23" fill="url(#down)" stroke="#5b87c4" strokeWidth="1.500" />
            <path d="M9 7h8v5h3l-7 7-7-7h3z" fill="#e3eefa" />
          </svg>
        </button>
      </footer>
    </div>
  );
};

export default App;
